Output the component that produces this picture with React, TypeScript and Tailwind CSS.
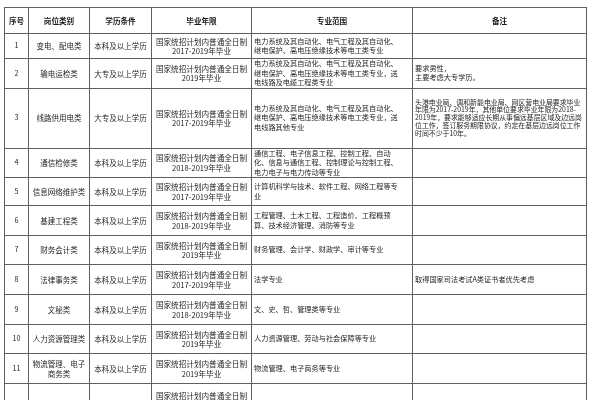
import React from 'react';

type Row = {
  no: string;
  post: string;
  edu: string;
  years: string;
  major: string;
  note?: string;
  h: number;
};

const rows: Row[] = [
  {
    no: '1',
    post: '变电、配电类',
    edu: '本科及以上学历',
    years: '2017-2019年毕业',
    major: '电力系统及其自动化、电气工程及其自动化、继电保护、高电压绝缘技术等电工类专业',
    h: 25,
  },
  {
    no: '2',
    post: '输电运检类',
    edu: '大专及以上学历',
    years: '2019年毕业',
    major: '电力系统及其自动化、电气工程及其自动化、继电保护、高电压绝缘技术等电工类专业，送电线路及电缆工程类专业',
    note: '要求男性，\n主要考虑大专学历。',
    h: 29,
  },
  {
    no: '3',
    post: '线路供用电类',
    edu: '大专及以上学历',
    years: '2017-2019年毕业',
    major: '电力系统及其自动化、电气工程及其自动化、继电保护、高电压绝缘技术等电工类专业，送电线路其他专业',
    note: '头港电业局、调和新能电业局、网区营电业局要求毕业年限为2017-2019年，其他单位要求毕业年限为2018-2019年，要求能够适应长期从事偏远基层区域及边远岗位工作，签订服务期限协议，约定在基层边远岗位工作时间不少于10年。',
    h: 60,
  },
  {
    no: '4',
    post: '通信检修类',
    edu: '本科及以上学历',
    years: '2018-2019年毕业',
    major: '通信工程、电子信息工程、控制工程、自动化、信息与通信工程、控制理论与控制工程、电力电子与电力传动等专业',
    h: 29,
  },
  {
    no: '5',
    post: '信息网络维护类',
    edu: '本科及以上学历',
    years: '2017-2019年毕业',
    major: '计算机科学与技术、软件工程、网络工程等专业',
    h: 28,
  },
  {
    no: '6',
    post: '基建工程类',
    edu: '本科及以上学历',
    years: '2018-2019年毕业',
    major: '工程管理、土木工程、工程造价、工程概预算、技术经济管理、消防等专业',
    h: 30,
  },
  {
    no: '7',
    post: '财务会计类',
    edu: '本科及以上学历',
    years: '2019年毕业',
    major: '财务管理、会计学、财政学、审计等专业',
    h: 29,
  },
  {
    no: '8',
    post: '法律事务类',
    edu: '本科及以上学历',
    years: '2017-2019年毕业',
    major: '法学专业',
    note: '取得国家司法考试A类证书者优先考虑',
    h: 30,
  },
  {
    no: '9',
    post: '文秘类',
    edu: '本科及以上学历',
    years: '2018-2019年毕业',
    major: '文、史、哲、管理类等专业',
    h: 30,
  },
  {
    no: '10',
    post: '人力资源管理类',
    edu: '本科及以上学历',
    years: '2019年毕业',
    major: '人力资源管理、劳动与社会保障等专业',
    h: 29,
  },
  {
    no: '11',
    post: '物流管理、电子商务类',
    edu: '本科及以上学历',
    years: '2019年毕业',
    major: '物流管理、电子商务等专业',
    h: 30,
  },
  {
    // last row is cut by the bottom edge of the picture
    no: '12',
    post: '',
    edu: '',
    years: '2019年毕业',
    major: '',
    h: 34,
  },
];

const cell = 'border border-[#5f5f5f] align-middle';

export default function App() {
  return (
    <div
      className="w-[600px] h-[400px] overflow-hidden bg-white pt-[7px] pl-[4px] text-[#262626] blur-[0.45px]"
      style={{ fontFamily: '"Noto Sans CJK SC", "Noto Sans", sans-serif' }}
    >
      <table className="table-fixed border-collapse w-[582px] text-[7.2px] leading-[9.5px]">
        <colgroup>
          <col className="w-[24px]" />
          <col className="w-[61px]" />
          <col className="w-[62px]" />
          <col className="w-[100px]" />
          <col className="w-[161px]" />
          <col className="w-[174px]" />
        </colgroup>
        <thead>
          <tr className="h-[26px] font-bold text-[#1a1a1a] text-[7.6px]">
            <th className={cell}>序号</th>
            <th className={cell}>岗位类别</th>
            <th className={cell}>学历条件</th>
            <th className={cell}>毕业年限</th>
            <th className={cell}>专业范围</th>
            <th className={cell}>备注</th>
          </tr>
        </thead>
        <tbody>
          {rows.map((r) => (
            <tr key={r.no} style={{ height: r.h }}>
              <td className={`${cell} text-center`}>{r.no === '12' ? '' : r.no}</td>
              <td className={`${cell} text-center px-[2px] text-[7.5px]`}>{r.post}</td>
              <td className={`${cell} text-center text-[7.5px]`}>{r.edu}</td>
              <td className={`${cell} text-center px-[1px] text-[7.6px]`}>
                国家统招计划内普通全日制
                <br />
                {r.years}
              </td>
              <td className={`${cell} text-left pl-[2px] pr-[9px]`}>{r.major}</td>
              <td
                className={`${cell} text-left px-[2px] whitespace-pre-line ${
                  r.no === '3' ? 'leading-[7.8px] text-[6.9px]' : ''
                }`}
              >
                {r.note ?? ''}
              </td>
            </tr>
          ))}
        </tbody>
      </table>
    </div>
  );
}
